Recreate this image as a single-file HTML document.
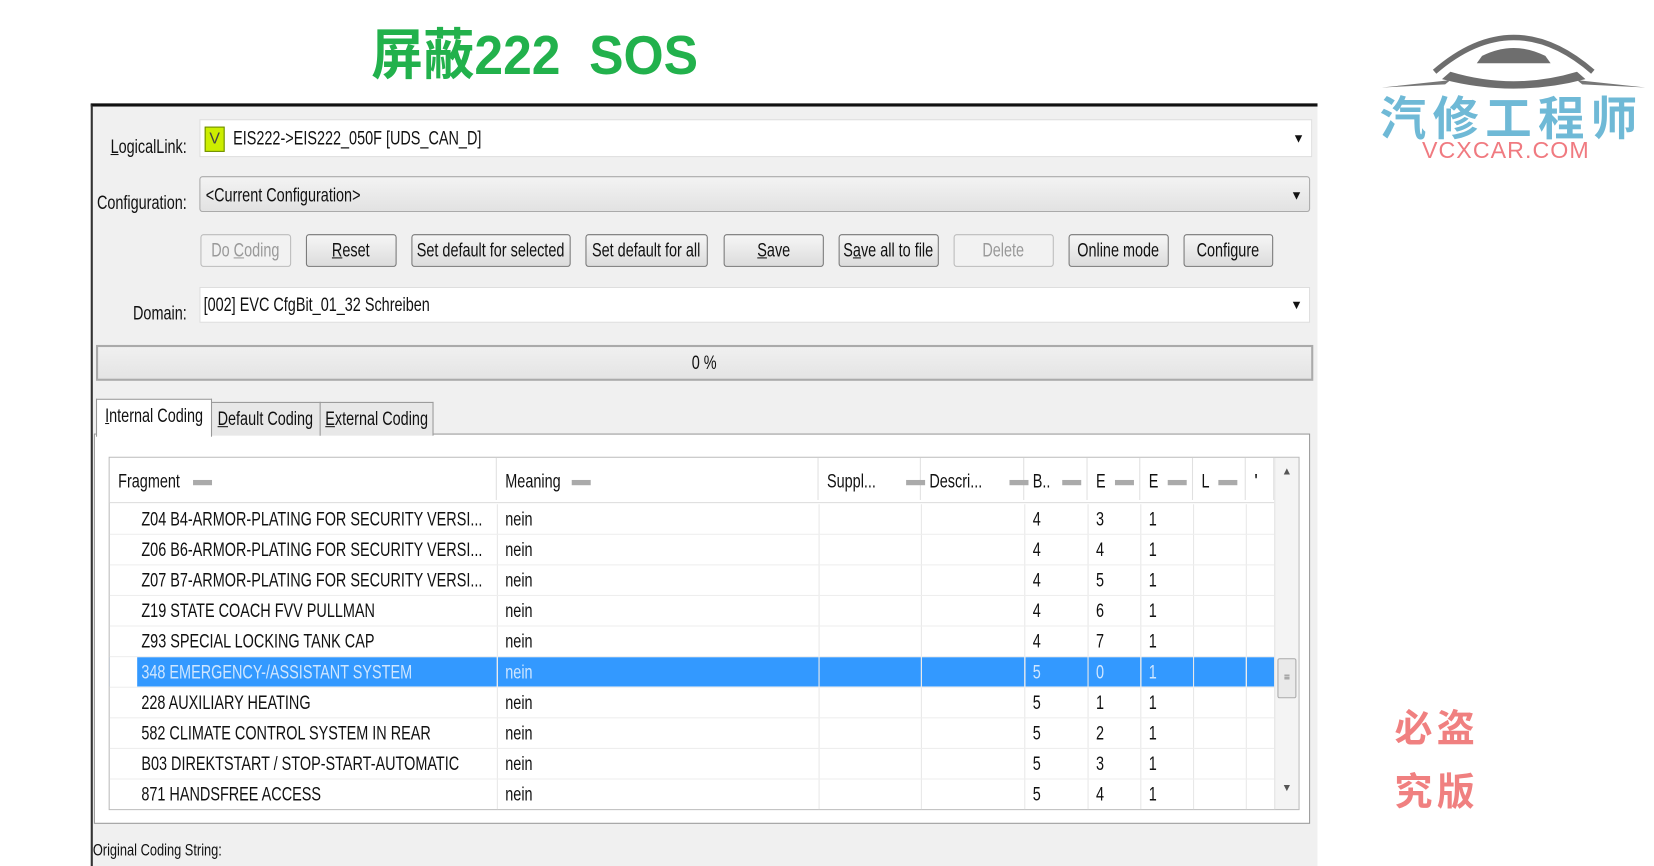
<!DOCTYPE html>
<html><head><meta charset="utf-8"><style>
html,body{margin:0;padding:0;width:1654px;height:855px;overflow:hidden;background:#fff}
#w{position:absolute;left:0;top:0;width:1568px;height:811px;transform:scale(1.05485);transform-origin:0 0;font-family:"Liberation Sans",sans-serif;font-size:18px;color:#111;white-space:nowrap}
.a{position:absolute}
.n{display:inline-block;transform:scaleX(.76);transform-origin:0 50%;flex:none}
.c{display:flex;justify-content:center;align-items:center}
.c .n{transform-origin:50% 50%}
.r{display:flex;justify-content:flex-end;align-items:center}
.r .n{transform-origin:100% 50%}
.panel{left:86px;top:98px;width:1161px;height:720px;background:#f0f0f0;border-top:3px solid #111;border-left:2px solid #333}
.lbl{width:100px;height:24px}
.fld{background:#fff;border:1px solid #ddd;height:34px;line-height:34px}
.arr{position:absolute;right:6px;top:0;font-size:12px}
.btn{top:222px;height:29px;border:1px solid #777;border-radius:3px;background:linear-gradient(#f6f6f6,#dcdcdc)}
.dis{color:#999;border-color:#bbb;background:#f2f2f2}
.tab{top:381px;height:31px;border:1px solid #999;border-bottom:none;background:#e8e8e8}
table{border-collapse:collapse;table-layout:fixed}
td{height:28px;border-right:1px solid #e8e8e8;border-bottom:1px solid #eee;padding:0 0 0 7px;white-space:nowrap;overflow:hidden}
tr.sel td{background:#3399ff;color:#cfe6ff}
.hd{position:absolute;top:0;height:40px;line-height:44px;border-right:1px solid #e0e0e0;padding-left:8px;box-sizing:border-box}
.dash{display:inline-block;width:18px;height:5px;background:#aaa;vertical-align:middle;margin-left:10px}
</style></head><body><div id="w">
<div class="a" style="left:352px;top:10px;font-family:'Liberation Sans','Noto Sans CJK SC',sans-serif;font-weight:bold;font-size:52px;color:#22b14c"><span class="n" style="transform:scaleX(.94)">屏蔽222&nbsp; SOS</span></div>

<svg class="a" style="left:1305px;top:18px" width="260" height="75" viewBox="0 0 260 75">
<path d="M55 50 Q130 -15 205 50" fill="none" stroke="#6e6e6e" stroke-width="5"/>
<path d="M100 35 Q130 20 160 35 L165 42 L95 42Z" fill="#6e6e6e"/>
<path d="M62 57 Q130 75 198 57 L190 50 Q130 68 70 50Z" fill="#6e6e6e"/>
<path d="M5 65 L70 58 L65 62Z M255 65 L190 58 L195 62Z" fill="#777"/>
</svg>
<div class="a" style="left:1308px;top:84px;font-family:'Noto Sans CJK SC',sans-serif;font-weight:bold;font-size:44px;line-height:50px;color:#6fb9d6;letter-spacing:6px">汽修工程师</div>
<div class="a" style="left:1348px;top:130px;font-family:'Liberation Sans',sans-serif;font-size:22px;color:#f07a80;letter-spacing:1px">VCXCAR.COM</div>
<div class="a" style="left:1322px;top:662px;font-family:'Noto Sans CJK SC',sans-serif;font-weight:bold;font-size:36px;color:#f08080;letter-spacing:4px">必盗</div>
<div class="a" style="left:1322px;top:722px;font-family:'Noto Sans CJK SC',sans-serif;font-weight:bold;font-size:36px;color:#f08080;letter-spacing:4px">究版</div>

<div class="a panel"></div>
<div class="a lbl r" style="left:77px;top:127px"><span class="n"><u>L</u>ogicalLink:</span></div>
<div class="a fld" style="left:189px;top:113px;width:1053px"><span style="display:inline-block;width:17px;height:22px;background:#ccee00;border:1px solid #6a8a00;color:#444;text-align:center;line-height:22px;font-size:15px;margin:0 8px 0 4px;vertical-align:middle">V</span><span class="n">EIS222-&gt;EIS222_050F [UDS_CAN_D]</span><span class="arr">▼</span></div>
<div class="a lbl r" style="left:77px;top:180px"><span class="n">Configuration:</span></div>
<div class="a fld" style="left:189px;top:167px;width:1053px;background:linear-gradient(#f3f3f3,#e2e2e2);border-color:#aaa;border-radius:3px;padding-left:5px;box-sizing:border-box"><span class="n">&lt;Current Configuration&gt;</span><span class="arr">▼</span></div>

<div class="a btn c dis" style="left:190px;width:84px"><span class="n">Do <u>C</u>oding</span></div>
<div class="a btn c" style="left:290px;width:84px"><span class="n"><u>R</u>eset</span></div>
<div class="a btn c" style="left:390px;width:149px"><span class="n">Set default for selected</span></div>
<div class="a btn c" style="left:555px;width:114px"><span class="n">Set default for all</span></div>
<div class="a btn c" style="left:686px;width:93px"><span class="n"><u>S</u>ave</span></div>
<div class="a btn c" style="left:795px;width:93px"><span class="n">S<u>a</u>ve all to file</span></div>
<div class="a btn c dis" style="left:904px;width:93px"><span class="n">Delete</span></div>
<div class="a btn c" style="left:1013px;width:93px"><span class="n">Online mode</span></div>
<div class="a btn c" style="left:1122px;width:83px"><span class="n">Configure</span></div>

<div class="a lbl r" style="left:77px;top:285px"><span class="n">Domain:</span></div>
<div class="a fld" style="left:189px;top:272px;width:1053px;line-height:32px;padding-left:3px;box-sizing:border-box"><span class="n">[002] EVC CfgBit_01_32 Schreiben</span><span class="arr">▼</span></div>

<div class="a c" style="left:91px;top:327px;width:1150px;height:30px;border:2px solid #aaa;background:linear-gradient(#f0f0f0,#e4e4e4)"><span class="n">0 %</span></div>

<div class="a" style="left:89px;top:411px;width:1151px;height:368px;border:1px solid #999;background:#fff"></div>
<div class="a tab c" style="left:91px;top:378px;width:108px;height:31px;padding-bottom:4px;background:#fff;z-index:2"><span class="n"><u>I</u>nternal Coding</span></div>
<div class="a tab c" style="left:200px;width:102px"><span class="n"><u>D</u>efault Coding</span></div>
<div class="a tab c" style="left:303px;width:106px"><span class="n"><u>E</u>xternal Coding</span></div>

<div class="a" style="left:103px;top:433px;width:1127px;height:333px;border:1px solid #bbb;background:#fff;overflow:hidden">
<div class="a" style="left:0;top:0;width:1104px;height:42px;background:#fff;border-bottom:1px solid #ddd">
<div class="hd" style="left:0;width:367px"><span class="n">Fragment</span><span class="dash" style="margin-left:-6px"></span></div>
<div class="hd" style="left:367px;width:305px"><span class="n">Meaning</span><span class="dash" style="margin-left:-6px"></span></div>
<div class="hd" style="left:672px;width:97px"><span class="n">Suppl...</span><span class="dash" style="margin-left:14px"></span></div>
<div class="hd" style="left:769px;width:98px"><span class="n">Descri...</span><span class="dash" style="margin-left:10px"></span></div>
<div class="hd" style="left:867px;width:60px"><span class="n">B..</span><span class="dash" style="margin-left:6px"></span></div>
<div class="hd" style="left:927px;width:50px"><span class="n">E</span><span class="dash" style="margin-left:6px"></span></div>
<div class="hd" style="left:977px;width:50px"><span class="n">E</span><span class="dash" style="margin-left:6px"></span></div>
<div class="hd" style="left:1027px;width:50px"><span class="n">L</span><span class="dash" style="margin-left:6px"></span></div>
<div class="hd" style="left:1077px;width:27px">'</div>
</div>
<table class="a" style="left:0;top:44px;width:1104px">
<colgroup><col style="width:367px"><col style="width:305px"><col style="width:97px"><col style="width:98px"><col style="width:60px"><col style="width:50px"><col style="width:50px"><col style="width:50px"><col style="width:27px"></colgroup>
<tr><td style="padding-left:30px"><span class="n">Z04 B4-ARMOR-PLATING FOR SECURITY VERSI...</span></td><td><span class="n">nein</span></td><td></td><td></td><td><span class="n">4</span></td><td><span class="n">3</span></td><td><span class="n">1</span></td><td></td><td></td></tr>
<tr><td style="padding-left:30px"><span class="n">Z06 B6-ARMOR-PLATING FOR SECURITY VERSI...</span></td><td><span class="n">nein</span></td><td></td><td></td><td><span class="n">4</span></td><td><span class="n">4</span></td><td><span class="n">1</span></td><td></td><td></td></tr>
<tr><td style="padding-left:30px"><span class="n">Z07 B7-ARMOR-PLATING FOR SECURITY VERSI...</span></td><td><span class="n">nein</span></td><td></td><td></td><td><span class="n">4</span></td><td><span class="n">5</span></td><td><span class="n">1</span></td><td></td><td></td></tr>
<tr><td style="padding-left:30px"><span class="n">Z19 STATE COACH FVV PULLMAN</span></td><td><span class="n">nein</span></td><td></td><td></td><td><span class="n">4</span></td><td><span class="n">6</span></td><td><span class="n">1</span></td><td></td><td></td></tr>
<tr><td style="padding-left:30px"><span class="n">Z93 SPECIAL LOCKING TANK CAP</span></td><td><span class="n">nein</span></td><td></td><td></td><td><span class="n">4</span></td><td><span class="n">7</span></td><td><span class="n">1</span></td><td></td><td></td></tr>
<tr class="sel"><td style="padding-left:30px;background:linear-gradient(90deg,#fff 26px,#3399ff 26px)"><span class="n">348 EMERGENCY-/ASSISTANT SYSTEM</span></td><td><span class="n">nein</span></td><td></td><td></td><td><span class="n">5</span></td><td><span class="n">0</span></td><td><span class="n">1</span></td><td></td><td></td></tr>
<tr><td style="padding-left:30px"><span class="n">228 AUXILIARY HEATING</span></td><td><span class="n">nein</span></td><td></td><td></td><td><span class="n">5</span></td><td><span class="n">1</span></td><td><span class="n">1</span></td><td></td><td></td></tr>
<tr><td style="padding-left:30px"><span class="n">582 CLIMATE CONTROL SYSTEM IN REAR</span></td><td><span class="n">nein</span></td><td></td><td></td><td><span class="n">5</span></td><td><span class="n">2</span></td><td><span class="n">1</span></td><td></td><td></td></tr>
<tr><td style="padding-left:30px"><span class="n">B03 DIREKTSTART / STOP-START-AUTOMATIC</span></td><td><span class="n">nein</span></td><td></td><td></td><td><span class="n">5</span></td><td><span class="n">3</span></td><td><span class="n">1</span></td><td></td><td></td></tr>
<tr><td style="padding-left:30px"><span class="n">871 HANDSFREE ACCESS</span></td><td><span class="n">nein</span></td><td></td><td></td><td><span class="n">5</span></td><td><span class="n">4</span></td><td><span class="n">1</span></td><td></td><td></td></tr>
</table>
<div class="a" style="left:1104px;top:0;width:23px;height:333px;background:#f4f4f4;border-left:1px solid #e4e4e4">
<div class="a" style="left:6px;top:8px;font-size:10px;color:#555">▲</div>
<div class="a" style="left:2px;top:190px;width:16px;height:36px;border:1px solid #aaa;border-radius:2px;background:#eaeaea;text-align:center;font-size:10px;line-height:36px;color:#666">≡</div>
<div class="a" style="left:6px;top:308px;font-size:10px;color:#555">▼</div>
</div>
</div>
<div class="a" style="left:88px;top:798px;font-size:16px"><span class="n">Original Coding String:</span></div>
</div></body></html>
